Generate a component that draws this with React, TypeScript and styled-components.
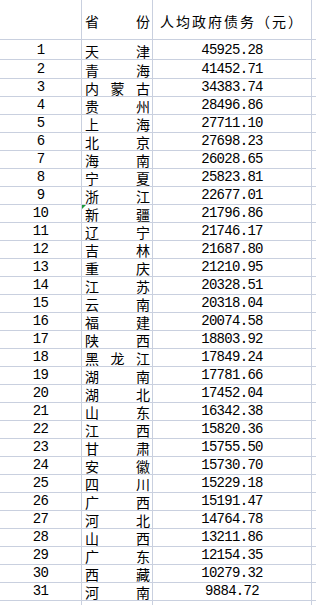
import React from 'react'
import styled, { createGlobalStyle } from 'styled-components'

const rows: [string, string][] = [
  ['天津', '45925.28'],
  ['青海', '41452.71'],
  ['内蒙古', '34383.74'],
  ['贵州', '28496.86'],
  ['上海', '27711.10'],
  ['北京', '27698.23'],
  ['海南', '26028.65'],
  ['宁夏', '25823.81'],
  ['浙江', '22677.01'],
  ['新疆', '21796.86'],
  ['辽宁', '21746.17'],
  ['吉林', '21687.80'],
  ['重庆', '21210.95'],
  ['江苏', '20328.51'],
  ['云南', '20318.04'],
  ['福建', '20074.58'],
  ['陕西', '18803.92'],
  ['黑龙江', '17849.24'],
  ['湖南', '17781.66'],
  ['湖北', '17452.04'],
  ['山东', '16342.38'],
  ['江西', '15820.36'],
  ['甘肃', '15755.50'],
  ['安徽', '15730.70'],
  ['四川', '15229.18'],
  ['广西', '15191.47'],
  ['河北', '14764.78'],
  ['山西', '13211.86'],
  ['广东', '12154.35'],
  ['西藏', '10279.32'],
  ['河南', '9884.72'],
]

// first rows are a bit taller than the rest
const rowHeight = (i: number) => (i === 0 ? 20 : i === 1 ? 19 : 18)

const GlobalStyle = createGlobalStyle`
  html, body {
    margin: 0;
    padding: 0;
    background: #fff;
    overflow: hidden;
  }
`

const Sheet = styled.div`
  width: 316px;
  height: 605px;
  overflow: hidden;
  font-family: 'Noto Sans CJK SC', sans-serif;
  color: #000;
`

const Row = styled.div<{ $h: number }>`
  display: grid;
  grid-template-columns: 82px 71px 159px 1fr;
  height: ${({ $h }) => $h}px;
`

const Cell = styled.div<{ $last?: boolean }>`
  position: relative;
  display: flex;
  align-items: flex-end;
  border-right: ${({ $last }) => ($last ? 'none' : '1px solid #c9d0df')};
  border-bottom: 1px solid #c9d0df;
  box-sizing: border-box;
  overflow: hidden;
  white-space: nowrap;
`

const HeadCell = styled(Cell)`
  align-items: center;
  padding-top: 2px;
`

const NumCell = styled(Cell)`
  justify-content: center;
  font-family: 'Liberation Mono', 'DejaVu Sans Mono', monospace;
  font-size: 14px;
  letter-spacing: -0.7px;
  line-height: 15px;
  padding-bottom: 1px;
`

const Province = styled(Cell)`
  justify-content: space-between;
  padding: 0 2px 0 3px;
  font-size: 14px;
  line-height: 16px;
`

const HeadProvince = styled(Province)`
  align-items: center;
  padding-top: 2px;
`

const Title = styled(HeadCell)`
  justify-content: center;
  font-size: 14px;
  letter-spacing: 2px;
  line-height: 16px;
  overflow: visible;
`

const ErrorMark = styled.span`
  position: absolute;
  left: 0;
  top: 0;
  width: 0;
  height: 0;
  border-top: 4px solid #1e9b3c;
  border-right: 4px solid transparent;
`

const Chars = ({ text }: { text: string }) => (
  <>
    {Array.from(text).map((c, i) => (
      <span key={i}>{c}</span>
    ))}
  </>
)

const App = () => (
  <>
    <GlobalStyle />
    <Sheet>
      <Row $h={40}>
        <HeadCell />
        <HeadProvince>
          <Chars text="省份" />
        </HeadProvince>
        <Title>人均政府债务（元）</Title>
        <HeadCell $last />
      </Row>
      {rows.map(([name, value], i) => (
        <Row key={name} $h={rowHeight(i)}>
          <NumCell>{i + 1}</NumCell>
          <Province>
            {name === '新疆' && <ErrorMark />}
            <Chars text={name} />
          </Province>
          <NumCell>{value}</NumCell>
          <Cell $last />
        </Row>
      ))}
      <Row $h={18}>
        <Cell />
        <Cell />
        <Cell />
        <Cell $last />
      </Row>
    </Sheet>
  </>
)

export default App
